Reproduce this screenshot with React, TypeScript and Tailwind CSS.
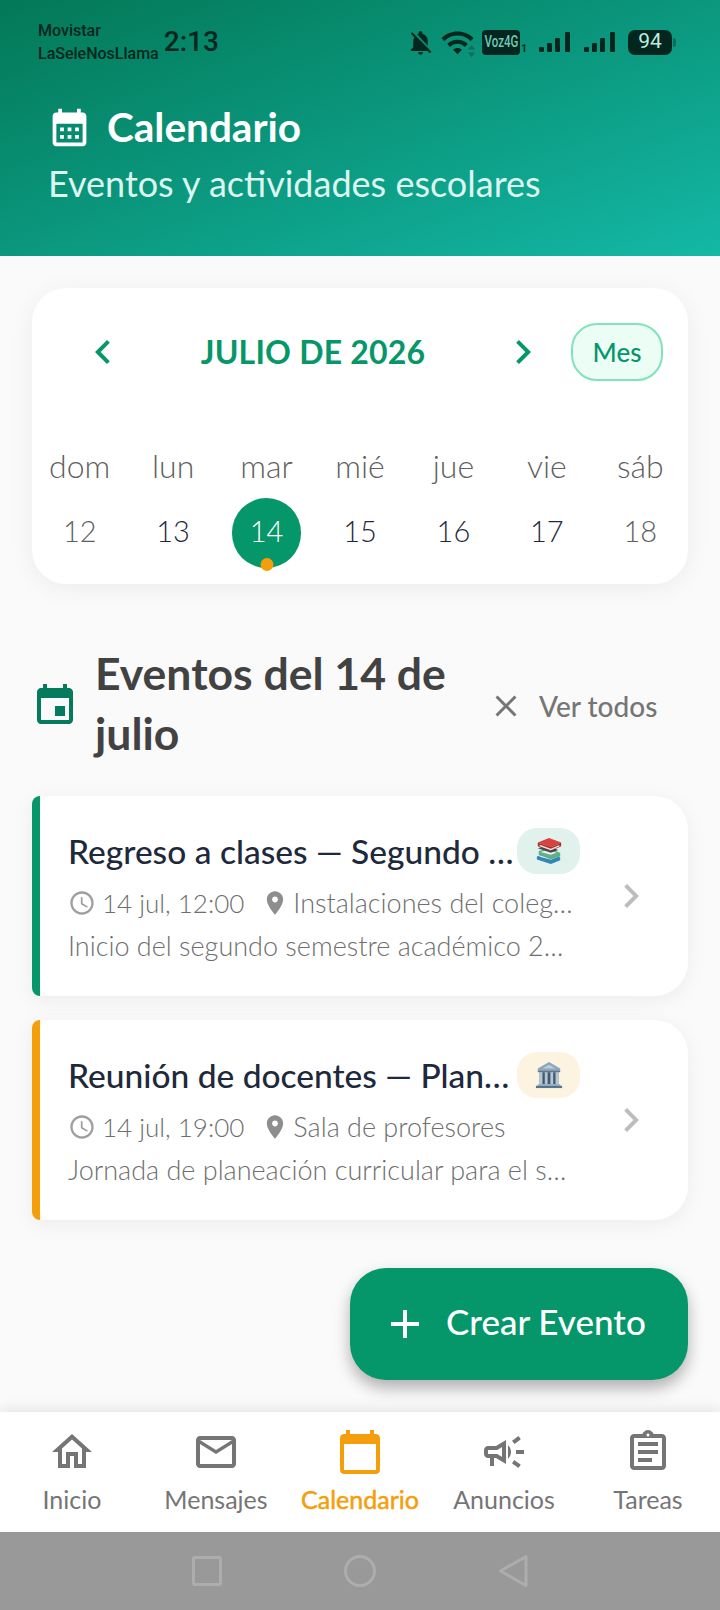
import React from 'react';

const FONT = "font-['Lato','Noto_Sans',sans-serif]";

const Icon = ({ d, size = 24, className = '' }: { d: string; size?: number; className?: string }) => (
  <svg width={size} height={size} viewBox="0 0 24 24" fill="currentColor" className={`shrink-0 ${className}`}>
    <path d={d} />
  </svg>
);

const paths = {
  bellOff: 'M20 18.69L7.84 6.14 5.27 3.49 4 4.76l2.8 2.8v.01c-.52.99-.8 2.16-.8 3.42v5l-2 2v1h13.73l2 2L21 19.72l-1-1.03zM12 22c1.11 0 2-.89 2-2h-4c0 1.11.89 2 2 2zm6-7.32V11c0-3.08-1.64-5.64-4.5-6.32V4c0-.83-.67-1.5-1.5-1.5s-1.5.67-1.5 1.5v.68c-.15.03-.29.08-.42.12-.1.03-.2.07-.3.11h-.01c-.2.08-.4.17-.59.27-.01 0-.01 0-.02.01L18 14.68z',
  wifi: 'M1 9l2 2c4.97-4.97 13.03-4.97 18 0l2-2C16.93 2.93 7.08 2.93 1 9zm8 8l3 3 3-3c-1.65-1.66-4.34-1.66-6 0zm-4-4l2 2c2.76-2.76 7.24-2.76 10 0l2-2C15.14 9.14 8.87 9.14 5 13z',
  month: 'M19 4h-1V2h-2v2H8V2H6v2H5c-1.11 0-2 .9-2 2v14c0 1.1.89 2 2 2h14c1.1 0 2-.9 2-2V6c0-1.1-.9-2-2-2zm0 16H5V10h14v10zM9 14H7v-2h2v2zm4 0h-2v-2h2v2zm4 0h-2v-2h2v2zm-8 4H7v-2h2v2zm4 0h-2v-2h2v2zm4 0h-2v-2h2v2z',
  left: 'M15.41 7.41L14 6l-6 6 6 6 1.41-1.41L10.83 12z',
  right: 'M10 6L8.59 7.41 13.17 12l-4.58 4.59L10 18l6-6z',
  event: 'M17 12h-5v5h5v-5zM16 1v2H8V1H6v2H5c-1.11 0-1.99.9-1.99 2L3 19c0 1.1.89 2 2 2h14c1.1 0 2-.9 2-2V5c0-1.1-.9-2-2-2h-1V1h-2zm3 18H5V8h14v11z',
  close: 'M19 6.41L17.59 5 12 10.59 6.41 5 5 6.41 10.59 12 5 17.59 6.41 19 12 13.41 17.59 19 19 17.59 13.41 12z',
  clock: 'M11.99 2C6.47 2 2 6.48 2 12s4.47 10 9.99 10C17.52 22 22 17.52 22 12S17.52 2 11.99 2zM12 20c-4.42 0-8-3.58-8-8s3.58-8 8-8 8 3.58 8 8-3.58 8-8 8zm.5-13H11v6l5.25 3.15.75-1.23-4.5-2.67z',
  place: 'M12 2C8.13 2 5 5.13 5 9c0 5.25 7 13 7 13s7-7.75 7-13c0-3.87-3.13-7-7-7zm0 9.5c-1.38 0-2.5-1.12-2.5-2.5s1.12-2.5 2.5-2.5 2.5 1.12 2.5 2.5-1.12 2.5-2.5 2.5z',
  add: 'M19 13h-6v6h-2v-6H5v-2h6V5h2v6h6v2z',
  home: 'M12 5.69l5 4.5V18h-2v-6H9v6H7v-7.81l5-4.5M12 3L2 12h3v8h6v-6h2v6h6v-8h3L12 3z',
  mail: 'M20 4H4c-1.1 0-1.99.9-1.99 2L2 18c0 1.1.9 2 2 2h16c1.1 0 2-.9 2-2V6c0-1.1-.9-2-2-2zm0 14H4V8l8 5 8-5v10zm-8-7L4 6h16l-8 5z',
  today: 'M20 3h-1V1h-2v2H7V1H5v2H4c-1.1 0-2 .9-2 2v16c0 1.1.9 2 2 2h16c1.1 0 2-.9 2-2V5c0-1.1-.9-2-2-2zm0 18H4V8h16v13z',
  campaign: 'M18 11v2h4v-2h-4zm-2 6.61c.96.71 2.21 1.65 3.2 2.39.4-.53.8-1.07 1.2-1.6-.99-.74-2.24-1.68-3.2-2.4-.4.54-.8 1.08-1.2 1.61zM20.4 5.6c-.4-.53-.8-1.07-1.2-1.6-.99.74-2.24 1.68-3.2 2.4.4.53.8 1.07 1.2 1.6.96-.72 2.21-1.65 3.2-2.4zM4 9c-1.1 0-2 .9-2 2v2c0 1.1.9 2 2 2h1v4h2v-4h1l5 3V6L8 9H4zm5.03 1.71L11 9.53v4.94l-1.97-1.18-.48-.29H4v-2h4.55l.48-.29zM15.5 12c0-1.33-.58-2.53-1.5-3.35v6.69c.92-.81 1.5-2.01 1.5-3.34z',
  assignment: 'M19 3h-4.18C14.4 1.84 13.3 1 12 1s-2.4.84-2.82 2H5c-.14 0-.27.01-.4.04-.39.08-.74.28-1.01.55-.18.18-.33.4-.43.64-.1.23-.16.49-.16.77v14c0 .27.06.54.16.78s.25.45.43.64c.27.27.62.47 1.01.55.13.02.26.03.4.03h14c1.1 0 2-.9 2-2V5c0-1.1-.9-2-2-2zm-7-.25c.41 0 .75.34.75.75s-.34.75-.75.75-.75-.34-.75-.75.34-.75.75-.75zM19 19H5V5h14v14zM7 15h7v2H7zm0-4h10v2H7zm0-4h10v2H7z',
};

const Signal = () => (
  <svg width="35" height="22" viewBox="0 0 35 22" fill="currentColor" className="shrink-0">
    <rect x="0" y="16" width="5" height="5" rx="1" />
    <rect x="8" y="12" width="5" height="9" rx="1" />
    <rect x="16" y="7" width="5" height="14" rx="1" />
    <rect x="26" y="1" width="5" height="20" rx="1" />
  </svg>
);

const StatusBar = () => (
  <div className="flex h-[40px] items-center pr-[44px] pl-[38px] text-[#03261e]">
    <div className="font-['Roboto',sans-serif] text-[16px] leading-[23px] font-medium">
      <div>Movistar</div>
      <div>LaSeleNosLlama</div>
    </div>
    <span className="ml-[5px] font-['Roboto',sans-serif] text-[28px] font-medium">2:13</span>
    <div className="ml-auto flex items-center">
      <Icon d={paths.bellOff} size={29} />
      <div className="relative ml-[5px]">
        <Icon d={paths.wifi} size={35} />
        <svg width="7" height="12" viewBox="0 0 7 12" fill="#0b6d5a" className="absolute right-0 bottom-[3px]">
          <path d="M3.5 0L7 4.5H0zM3.5 12L0 7.5h7z" />
        </svg>
      </div>
      <div className="ml-[7px] flex h-[25px] w-[38px] items-center justify-center overflow-hidden rounded-[4px] bg-[#03261e] font-['Roboto',sans-serif] text-[16px] font-medium text-[#6fc9b6]">
        <span className="scale-x-[0.72]">Voz4G</span>
      </div>
      <span className="mt-[12px] ml-[1px] font-['Roboto',sans-serif] text-[10px] font-bold">1</span>
      <div className="ml-[12px]"><Signal /></div>
      <div className="ml-[10px]"><Signal /></div>
      <div className="ml-[9px] flex h-[25px] w-[44px] items-center justify-center rounded-[7px] bg-[#03261e] font-['Roboto',sans-serif] text-[21px] text-[#b9eee0]">
        94
      </div>
      <div className="ml-[1px] h-[9px] w-[3px] rounded-r-[3px] bg-[#0b6d5a]" />
    </div>
  </div>
);

const Books = () => (
  <svg width="28" height="28" viewBox="0 0 30 30" className="shrink-0">
    <path d="M2 21l11-3 14 4v3l-10 4-15-5z" fill="#2f86b8" />
    <path d="M4 21l9-2.5 11 3.2-7 2.6z" fill="#e4edf0" />
    <path d="M4 15l10-3 13 5v4l-10 3-13-5z" fill="#5fb08a" />
    <path d="M6 16l8-2.4 9 3.4-6 2z" fill="#eef2e8" />
    <path d="M3 12l9-3 13 5-8 3z" fill="#3c4a55" />
    <path d="M3 6l12-5 13 5-11 5z" fill="#d9423e" />
    <path d="M3 6l14 5 11-5v4l-11 5-14-5z" fill="#a9302c" />
    <path d="M5 8.4l12 4.3 9-4v1.6l-9 3.8-12-4.2z" fill="#efe8dc" />
  </svg>
);

const Bank = () => (
  <svg width="28" height="28" viewBox="0 0 30 30" className="shrink-0">
    <path d="M15 1L3 8v2h24V8z" fill="#8ba6bd" />
    <path d="M15 4L8 8h14z" fill="#bccddb" />
    <rect x="3" y="10" width="24" height="2" fill="#5d7890" />
    <rect x="5" y="12" width="20" height="13" fill="#43586c" />
    <rect x="5" y="12" width="3" height="13" fill="#b4c7d7" />
    <rect x="10.5" y="12" width="3" height="13" fill="#b4c7d7" />
    <rect x="16.5" y="12" width="3" height="13" fill="#b4c7d7" />
    <rect x="22" y="12" width="3" height="13" fill="#b4c7d7" />
    <rect x="3" y="25" width="24" height="1.5" fill="#8ba6bd" />
    <rect x="1" y="26.5" width="28" height="2.5" fill="#56738c" />
  </svg>
);

const days = [
  { w: 'dom', d: '12', muted: true },
  { w: 'lun', d: '13' },
  { w: 'mar', d: '14', selected: true },
  { w: 'mié', d: '15' },
  { w: 'jue', d: '16' },
  { w: 'vie', d: '17' },
  { w: 'sáb', d: '18', muted: true },
];

const CalendarCard = () => (
  <div className="rounded-[34px] bg-white pt-[35px] pb-[16px] shadow-[0_4px_24px_rgba(0,0,0,0.06)]">
    <div className="flex items-center pr-[25px] pl-[47px]">
      <Icon d={paths.left} size={48} className="text-[#059669]" />
      <div className="flex-1 text-center text-[32px] font-bold tracking-[0.2px] text-[#059669]">JULIO DE 2026</div>
      <Icon d={paths.right} size={48} className="text-[#059669]" />
      <div className="ml-[24px] flex h-[58px] w-[92px] items-center justify-center rounded-[26px] border-2 border-[#7fe3bd] bg-[#ecfdf5] text-[26px] font-medium text-[#059669]">
        Mes
      </div>
    </div>
    <div className="mt-[65px] grid grid-cols-7 px-[1px]">
      {days.map((x) => (
        <div key={x.w} className="flex flex-col items-center">
          <div className="h-[40px] text-[32px] leading-[40px] font-light text-[#5f5f5f]">{x.w}</div>
          <div
            className={`relative mt-[12px] flex h-[70px] w-[69px] items-center justify-center rounded-full pb-[4px] text-[29px] font-light ${
              x.selected ? 'bg-[#059669] text-white' : x.muted ? 'text-[#5f5f5f]' : 'text-[#1e293b]'
            }`}
          >
            {x.d}
            {x.selected && <span className="absolute bottom-[-3px] left-1/2 h-[13px] w-[13px] -translate-x-1/2 rounded-full bg-[#f59e0b]" />}
          </div>
        </div>
      ))}
    </div>
  </div>
);

const EventCard = ({
  color,
  badge,
  title,
  time,
  place,
  desc,
  icon,
}: {
  color: string;
  badge: string;
  title: string;
  time: string;
  place: string;
  desc: string;
  icon: React.ReactNode;
}) => (
  <div className="flex h-[200px] rounded-r-[34px] shadow-[0_4px_20px_rgba(0,0,0,0.06)]">
    <div className={`w-[8px] shrink-0 rounded-l-[8px] ${color}`} />
    <div className="flex flex-1 items-center rounded-l-[12px] rounded-r-[34px] bg-white pr-[33px] pl-[28px]">
      <div className="w-[512px] min-w-0">
        <div className="flex items-center justify-between">
          <div className="text-[33.5px] leading-[46px] font-medium whitespace-nowrap text-[#1e293b]">{title}</div>
          <div className={`flex h-[46px] w-[63px] shrink-0 items-center justify-center rounded-[20px] ${badge}`}>{icon}</div>
        </div>
        <div className="mt-[10px] flex h-[38px] items-center text-[27px] font-light whitespace-nowrap text-[#6e6e6e]">
          <Icon d={paths.clock} size={28} className="text-[#9e9e9e]" />
          <span className="ml-[6px] shrink-0 text-[26px]">{time}</span>
          <Icon d={paths.place} size={28} className="ml-[17px] text-[#8e8e8e]" />
          <span className="ml-[4px]">{place}</span>
        </div>
        <div className="mt-[6px] text-[27px] leading-[36px] font-light whitespace-nowrap text-[#6e6e6e]">{desc}</div>
      </div>
      <Icon d={paths.right} size={48} className="ml-auto text-[#bdbdbd]" />
    </div>
  </div>
);

const nav = [
  { label: 'Inicio', d: paths.home },
  { label: 'Mensajes', d: paths.mail },
  { label: 'Calendario', d: paths.today, active: true },
  { label: 'Anuncios', d: paths.campaign },
  { label: 'Tareas', d: paths.assignment },
];

export default function App() {
  return (
    <div className={`${FONT} relative flex h-[1610px] w-[720px] flex-col overflow-hidden bg-[#fafafa]`}>
      <header className="h-[256px] shrink-0 bg-linear-to-br from-[#047857] to-[#14b8a6] pt-[22px]">
        <StatusBar />
        <div className="mt-[41px] flex items-center pl-[47px]">
          <Icon d={paths.month} size={45} className="text-white" />
          <h1 className="ml-[15px] text-[40.5px] leading-[48px] font-bold text-white">Calendario</h1>
        </div>
        <p className="mt-[10px] pl-[48px] text-[36px] leading-[44px] text-[#dcf5ee]">Eventos y actividades escolares</p>
      </header>

      <main className="flex-1 px-[32px] pt-[32px]">
        <CalendarCard />

        <div className="mt-[59px] flex items-center">
          <Icon d={paths.event} size={48} className="mt-[6px] ml-[-1px] text-[#067a5c]" />
          <h2 className="ml-[16px] w-[370px] text-[44.5px] leading-[60px] font-bold text-[#424242]">Eventos del 14 de julio</h2>
          <Icon d={paths.close} size={36} className="mt-[6px] ml-[23px] text-[#757575]" />
          <span className="mt-[6px] ml-[15px] text-[28px] font-medium text-[#757575]">Ver todos</span>
        </div>

        <div className="mt-[33px] flex flex-col gap-[24px]">
          <EventCard
            color="bg-[#059669]"
            badge="bg-[#e1f1ec]"
            title="Regreso a clases — Segundo …"
            time="14 jul, 12:00"
            place="Instalaciones del coleg…"
            desc="Inicio del segundo semestre académico 2…"
            icon={<Books />}
          />
          <EventCard
            color="bg-[#f59e0b]"
            badge="bg-[#fdf3e1]"
            title="Reunión de docentes — Plan…"
            time="14 jul, 19:00"
            place="Sala de profesores"
            desc="Jornada de planeación curricular para el s…"
            icon={<Bank />}
          />
        </div>
      </main>

      <button className="absolute top-[1268px] right-[32px] flex h-[112px] w-[338px] items-center rounded-[36px] bg-[#059669] pl-[31px] text-[35px] font-medium text-white shadow-[0_8px_16px_rgba(0,0,0,0.3)]">
        <Icon d={paths.add} size={48} />
        <span className="ml-[17px] pb-[6px]">Crear Evento</span>
      </button>

      <nav className="flex h-[120px] shrink-0 bg-white shadow-[0_-4px_12px_rgba(0,0,0,0.08)]">
        {nav.map((n) => (
          <div key={n.label} className={`flex flex-1 flex-col items-center pt-[16px] ${n.active ? 'text-[#f59e0b]' : 'text-[#757575]'}`}>
            <Icon d={n.d} size={48} />
            <span className={`mt-[8px] text-[25px] leading-[30px] ${n.active ? '[-webkit-text-stroke:0.5px_#f59e0b]' : ''}`}>{n.label}</span>
          </div>
        ))}
      </nav>

      <div className="flex h-[78px] shrink-0 items-center justify-center gap-[122px] bg-[#999999]">
        <div className="h-[30px] w-[30px] rounded-[3px] border-[3px] border-[#adadad]" />
        <div className="h-[32px] w-[32px] rounded-full border-[3px] border-[#adadad]" />
        <svg width="30" height="34" viewBox="0 0 30 34" fill="none" className="shrink-0">
          <path d="M28 2.5v29L2.5 17z" stroke="#adadad" strokeWidth="3" strokeLinejoin="round" />
        </svg>
      </div>
    </div>
  );
}
